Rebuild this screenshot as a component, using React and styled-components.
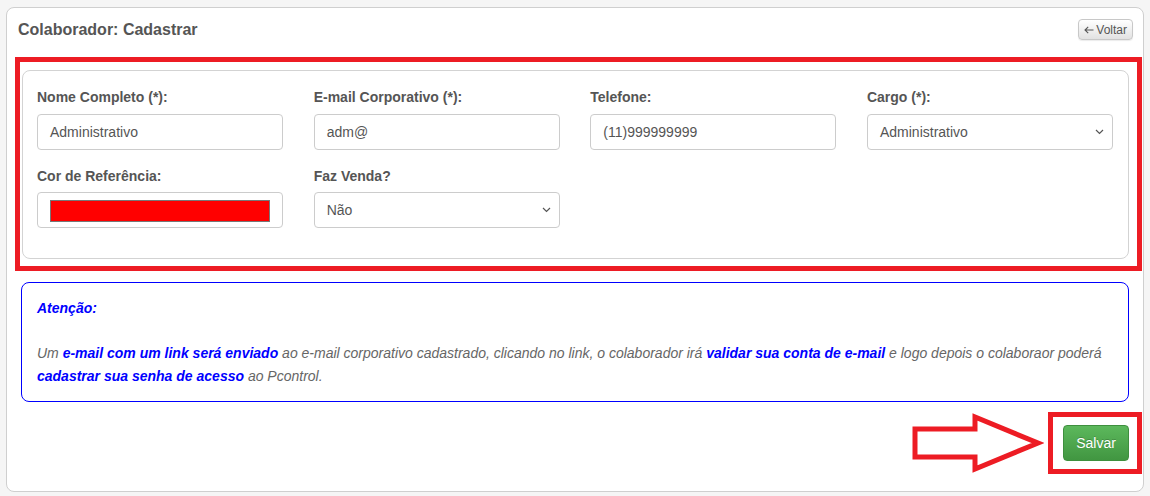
import React from 'react';
import styled, { createGlobalStyle } from 'styled-components';

const GlobalStyle = createGlobalStyle`
  html, body {
    margin: 0;
    padding: 0;
    background: #f5f5f5;
    font-family: "Liberation Sans", Arial, sans-serif;
  }
`;

const Page = styled.div`
  padding: 7px 6px 5px 6px;
`;

const Card = styled.div`
  background: #fff;
  border: 1px solid #cfcfcf;
  border-radius: 8px;
  height: 485px;
  box-sizing: border-box;
  padding: 0 14px;
`;

const Header = styled.div`
  display: flex;
  align-items: center;
  justify-content: space-between;
  padding-top: 11px;
  margin-bottom: 17px;
`;

const Title = styled.h3`
  margin: 0 0 0 -3px;
  font-size: 16px;
  font-weight: bold;
  color: #555;
`;

const BackButton = styled.button`
  margin-right: -4px;
  height: 21px;
  padding: 0 5px;
  display: flex;
  align-items: center;
  gap: 2px;
  font-family: inherit;
  font-size: 12px;
  color: #555;
  background: linear-gradient(#ffffff, #e2e2e2);
  border: 1px solid #c8c8c8;
  border-radius: 4px;
  box-shadow: 0 1px 1px rgba(0, 0, 0, 0.08);
`;

const Highlight = styled.div`
  border: 5px solid #ed1c24;
  margin: ${(p) => p.margin || '0'};
  padding: ${(p) => p.pad || '0'};
`;

const FormCard = styled.div`
  border: 1px solid #d3d3d3;
  border-radius: 8px;
  padding: 16px 15px 30px 14px;
  display: grid;
  grid-template-columns: repeat(4, 246px);
  justify-content: space-between;
  row-gap: 16px;
`;

const Field = styled.div`
  display: flex;
  flex-direction: column;
`;

const Label = styled.label`
  font-size: 14px;
  line-height: 20px;
  font-weight: bold;
  color: #555;
  margin-bottom: ${(p) => (p.tight ? '6px' : '7px')};
`;

const Input = styled.div`
  height: 36px;
  box-sizing: border-box;
  border: 1px solid #cccccc;
  border-radius: 4px;
  padding: 0 8px 0 12px;
  display: flex;
  align-items: center;
  justify-content: space-between;
  font-size: 14px;
  color: #555;
`;

const Swatch = styled.div`
  flex: 1;
  height: 20px;
  margin-right: 4px;
  background: ${(p) => p.color};
  border: 1px solid #777;
  margin-top: 1px;
`;

const Chevron = () => (
  <svg width="9" height="6" viewBox="0 0 9 6">
    <path d="M1 1 L4.5 4.5 L8 1" fill="none" stroke="#555" strokeWidth="1.2" />
  </svg>
);

const BackArrow = () => (
  <svg width="10" height="8" viewBox="0 0 10 8">
    <path d="M9.5 4 H1 M4.2 0.8 L1 4 L4.2 7.2" fill="none" stroke="#555" strokeWidth="1.1" />
  </svg>
);

const Notice = styled.div`
  margin-top: 11px;
  border: 1px solid #0000ff;
  border-radius: 8px;
  padding: 14px 15px 13px;
  font-size: 14px;
  line-height: 23px;
  font-style: italic;
  color: #666;
`;

const NoticeTitle = styled.p`
  margin: 0 0 22px;
  color: #0000ff;
  font-weight: bold;
`;

const NoticeText = styled.p`
  margin: 0;
`;

const Strong = styled.b`
  color: #0000ff;
`;

const Footer = styled.div`
  display: flex;
  justify-content: flex-end;
  align-items: center;
  margin: 10px -13px 0 0;
  gap: 4px;
`;

const SaveButton = styled.button`
  width: 66px;
  height: 36px;
  font-family: inherit;
  font-size: 14px;
  color: #fff;
  text-shadow: 0 -1px 0 rgba(0, 0, 0, 0.2);
  background: linear-gradient(#5cb85c, #419641);
  border: 1px solid #3e8f3e;
  border-radius: 4px;
`;

const Arrow = () => (
  <svg width="134" height="60" viewBox="0 0 134 60">
    <polygon
      points="5,16 65,16 65,4 128,30 65,56 65,44 5,44"
      fill="#fff"
      stroke="#ed1c24"
      strokeWidth="5"
    />
  </svg>
);

export default function App() {
  return (
    <Page>
      <GlobalStyle />
      <Card>
        <Header>
          <Title>Colaborador: Cadastrar</Title>
          <BackButton>
            <BackArrow />
            Voltar
          </BackButton>
        </Header>

        <Highlight margin="0 -13px 0 -6px" pad="8px 8px 7px 2px">
          <FormCard>
            <Field>
              <Label>Nome Completo (*):</Label>
              <Input>Administrativo</Input>
            </Field>
            <Field>
              <Label>E-mail Corporativo (*):</Label>
              <Input>adm@</Input>
            </Field>
            <Field>
              <Label>Telefone:</Label>
              <Input>(11)999999999</Input>
            </Field>
            <Field>
              <Label>Cargo (*):</Label>
              <Input>
                Administrativo
                <Chevron />
              </Input>
            </Field>
            <Field>
              <Label tight>Cor de Referência:</Label>
              <Input>
                <Swatch color="#ff0000" />
              </Input>
            </Field>
            <Field>
              <Label tight>Faz Venda?</Label>
              <Input>
                Não
                <Chevron />
              </Input>
            </Field>
          </FormCard>
        </Highlight>

        <Notice>
          <NoticeTitle>Atenção:</NoticeTitle>
          <NoticeText>
            Um <Strong>e-mail com um link será enviado</Strong> ao e-mail corporativo cadastrado,
            clicando no link, o colaborador irá <Strong>validar sua conta de e-mail</Strong> e logo
            depois o colaboraor poderá <Strong>cadastrar sua senha de acesso</Strong> ao Pcontrol.
          </NoticeText>
        </Notice>

        <Footer>
          <Arrow />
          <Highlight pad="8px 8px 8px 10px">
            <SaveButton>Salvar</SaveButton>
          </Highlight>
        </Footer>
      </Card>
    </Page>
  );
}
